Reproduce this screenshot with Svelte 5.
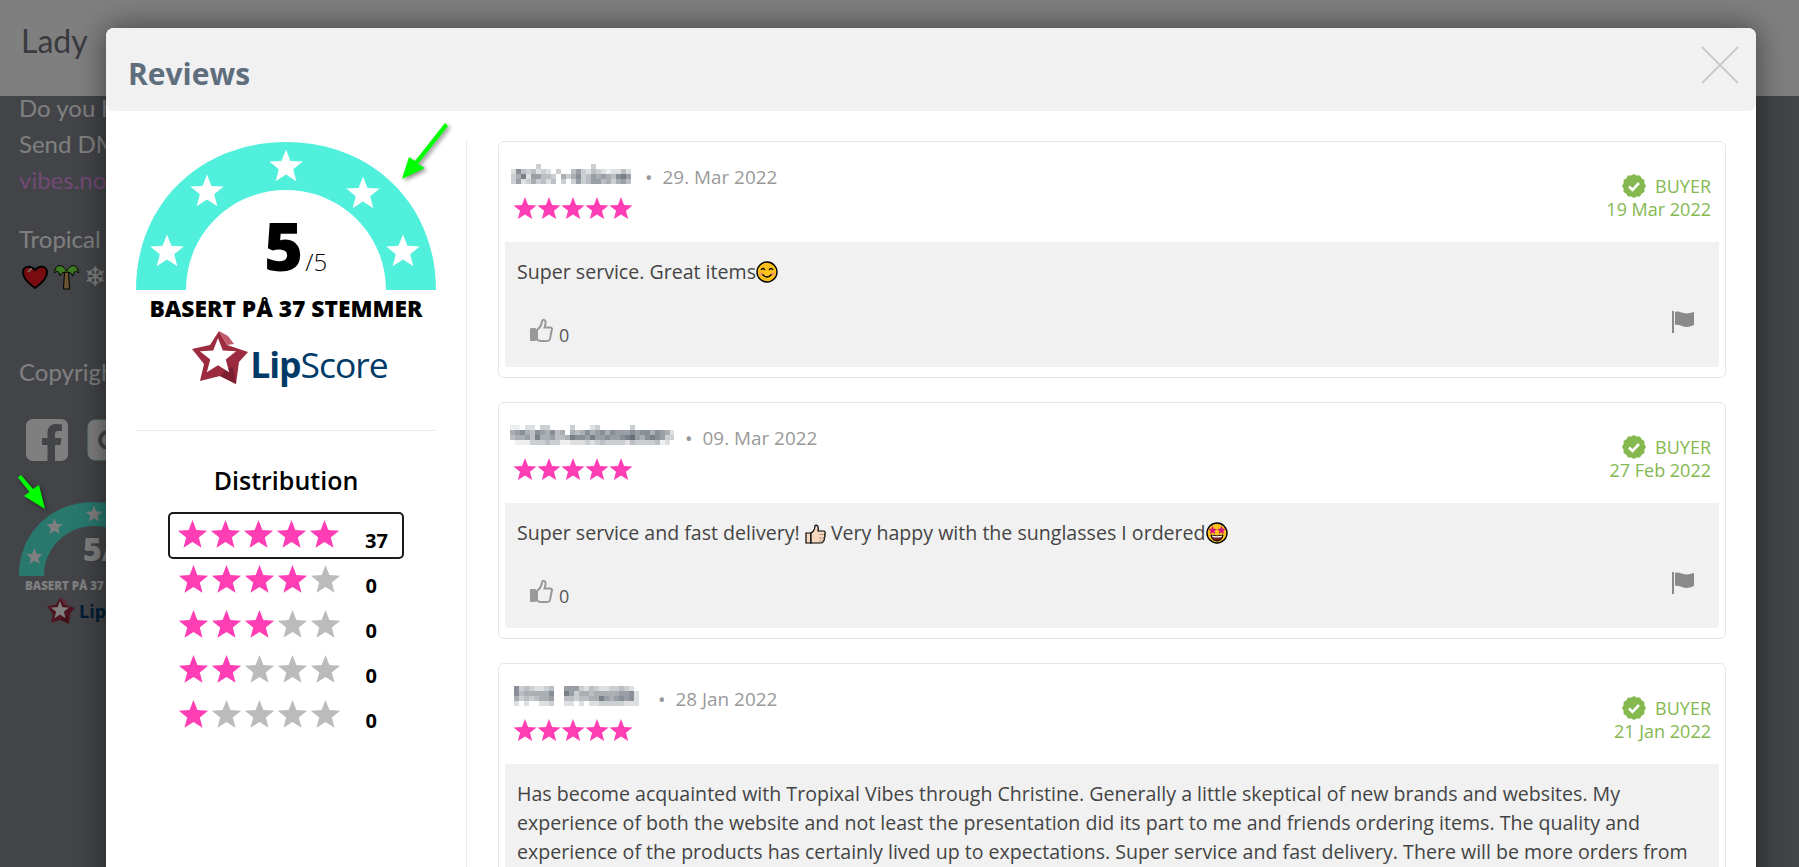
<script>
  // five point star, returned as an svg points string
  function star(cx, cy, r) {
    const pts = [];
    for (let i = 0; i < 10; i++) {
      const rad = i % 2 ? r * 0.43 : r;
      const a = (Math.PI / 5) * i - Math.PI / 2;
      pts.push((cx + rad * Math.cos(a)).toFixed(2) + ',' + (cy + rad * Math.sin(a)).toFixed(2));
    }
    return pts.join(' ');
  }

  function seal(cx, cy, r1, r2, n) {
    const pts = [];
    for (let i = 0; i < n * 2; i++) {
      const rad = i % 2 ? r2 : r1;
      const a = (Math.PI / n) * i;
      pts.push((cx + rad * Math.cos(a)).toFixed(2) + ',' + (cy + rad * Math.sin(a)).toFixed(2));
    }
    return pts.join(' ');
  }

  const gaugeStars = [
    [31, 110],
    [71, 50],
    [150, 25],
    [227, 52],
    [267, 110]
  ];

  const distribution = [
    { filled: 5, count: 37, active: true },
    { filled: 4, count: 0 },
    { filled: 3, count: 0 },
    { filled: 2, count: 0 },
    { filled: 1, count: 0 }
  ];

  // pixelated names: one digit per 5px cell, 0 is white
  const reviews = [
    {
      left: 1,
      width: 124,
      name: [
        '000003000000000030000000',
        '274342320300463243212242',
        '358266443053573465654786',
        '362353424030363466453564'
      ],
      date: '29. Mar 2022',
      buyer: '19 Mar 2022',
      emoji: 'simple'
    },
    {
      left: 0,
      width: 164,
      name: [
        '110220330000300023000000300000000',
        '567547657450545756757666767757652',
        '455648556445877686676678965787633',
        '011133343311222323433332433334120'
      ],
      date: '09. Mar 2022',
      buyer: '27 Feb 2022',
      emoji: 'thumb'
    },
    {
      left: 4,
      width: 137,
      name: [
        '73432234006663243223343200',
        '74555557008635545555566720',
        '53434556004434455865676720',
        '20200223002202022333332220'
      ],
      date: '28 Jan 2022',
      buyer: '21 Jan 2022',
      emoji: 'long'
    }
  ];

  function cell(d) {
    return `rgb(${255 - d * 17},${255 - d * 16},${255 - d * 15})`;
  }
</script>

{#snippet gaugeArc(size)}
  <svg class="arc" width={size} height={size * 0.4933} viewBox="0 0 300 148">
    <path class="band" d="M0 148 C0 60 66 0 150 0 C234 0 300 60 300 148 L250 148 C250 92 205 48 150 48 C95 48 50 92 50 148 Z" />
    {#each gaugeStars as s}
      <polygon class="gauge-star" points={star(s[0], s[1], 17.6)} />
    {/each}
  </svg>
{/snippet}

{#snippet lipStar(size)}
  <svg class="lipstar" width={size} height={size} viewBox="0 0 56 54">
    <polygon fill="#9c2b40" points="27,0 35,14 56,21 47,31 44,53 28,45 8,50 12,33 0,18 18,14" />
    <polygon fill="#c25a6b" points="27,0 35,14 42,13 36,5" />
    <polygon fill="#7c1f30" points="44,53 28,45 34,38 41,36" />
    <polygon fill="#fff" points={star(26, 26, 19)} />
  </svg>
{/snippet}

<div class="page">
  <div class="topbar"><h1>Lady</h1></div>
  <div class="footer">
    <p>Do you have any questions?</p>
    <p>Send DM or email to</p>
    <p class="link">vibes.no</p>
    <p class="tropical">Tropical</p>
    <div class="bg-emoji">
      <svg width="28" height="26" viewBox="0 0 28 26">
        <path d="M14 24 C6 18 2 14 2 8 C2 3 9 0 14 6 C19 0 26 3 26 8 C26 14 22 18 14 24 Z" fill="#f01822" stroke="#000" stroke-width="2" />
        <path d="M7 8 Q9 5 11 5" stroke="#fca" stroke-width="2" fill="none" />
      </svg>
      <svg width="25" height="27" viewBox="0 0 25 27">
        <path d="M10.500 9 H14.500 L15.500 26 H9.500 Z" fill="#d8a866" stroke="#000" />
        <path d="M12.500 8 C8 0 1 1 0.500 10 C3 7 5 8 6 13 C7 10 10 9 12.500 9 C15 9 18 10 19 13 C20 8 22 7 24.500 10 C24 1 17 0 12.500 8 Z" fill="#7af044" stroke="#000" />
      </svg>
      <span class="flake">❄</span>
    </div>
    <p class="copy">Copyright</p>
    <div class="social">
      <svg width="42" height="42" viewBox="0 0 42 42">
        <path fill="#fff" d="M7 0 H35 C39 0 42 3 42 7 V35 C42 39 39 42 35 42 H29 V26 H34.500 L35.500 19 H29 V15 C29 13 30 12 32 12 H36 V5.500 C34 5.200 32 5 30 5 C25 5 21.500 8 21.500 14 V19 H16 V26 H21.500 V42 H7 C3 42 0 39 0 35 V7 C0 3 3 0 7 0 Z" />
      </svg>
      <svg width="42" height="42" viewBox="0 0 42 42">
        <rect x="1" y="1" width="40" height="40" rx="7" fill="#fff" stroke="#cfe" />
        <circle cx="21" cy="21" r="8" fill="none" stroke="#84898f" stroke-width="4" />
      </svg>
    </div>
    <div class="mini">
      {@render gaugeArc(150)}
      <span class="mini-score">5/5</span>
      <div class="mini-label">BASERT PÅ 37 STEMMER</div>
      <div class="mini-logo">
        {@render lipStar(28)}
        <span>LipScore</span>
      </div>
    </div>
  </div>

  <div class="overlay"></div>

  <svg class="arrow small" width="40" height="48" viewBox="0 0 40 48">
    <polygon fill="#00ff00" points="27,35 6,22 11.500,18 0,3.500 3,1 15,15 21,11" />
  </svg>

  <div class="modal">
    <header>
      <h2>Reviews</h2>
      <svg class="close" width="38" height="38" viewBox="0 0 38 38">
        <path d="M1 1 L37 37 M37 1 L1 37" />
      </svg>
    </header>

    <div class="body">
      <aside>
        <div class="gauge">
          {@render gaugeArc(300)}
          <div class="score"><b>5</b><span>/5</span></div>
        </div>
        <div class="label">BASERT PÅ 37 STEMMER</div>
        <div class="logo">
          {@render lipStar(56)}
          <span class="lip"><b>Lip</b>Score</span>
        </div>
        <hr />
        <h3>Distribution</h3>
        <div class="dist">
          {#each distribution as row}
            <div class="row" class:active={row.active}>
              <svg width="165" height="28" viewBox="0 0 165 28">
                {#each [0, 1, 2, 3, 4] as i}
                  <polygon class={i < row.filled ? 'on' : 'off'} points={star(16.5 + i * 33, 15.4, 15.4)} />
                {/each}
              </svg>
              <span class="count">{row.count}</span>
            </div>
          {/each}
        </div>
      </aside>

      <main>
        {#each reviews as r}
          <article>
            <div class="head">
              <div>
                <div class="who">
                  <svg class="name" width={r.width} height="20">
                    {#each r.name as line, y}
                      {#each line.split('') as d, x}
                        {#if d !== '0'}
                          <rect x={r.left + x * 5} y={y * 5} width="5" height="5" fill={cell(+d)} />
                        {/if}
                      {/each}
                    {/each}
                  </svg>
                  <span class="dot">•</span>
                  <span class="date">{r.date}</span>
                </div>
                <svg class="stars" width="120" height="22" viewBox="0 0 120 22">
                  {#each [0, 1, 2, 3, 4] as i}
                    <polygon class="on" points={star(12 + i * 24, 12.2, 12.2)} />
                  {/each}
                </svg>
              </div>
              <div class="buyer">
                <div class="badge">
                  <svg width="24" height="24" viewBox="0 0 24 24">
                    <polygon points={seal(12, 12, 12, 10.8, 12)} fill="#85b84f" />
                    <path d="M7 12.5 L10.5 16 L17 9" fill="none" stroke="#fff" stroke-width="2.6" />
                  </svg>
                  BUYER
                </div>
                <div>{r.buyer}</div>
              </div>
            </div>

            <div class="content">
              {#if r.emoji === 'simple'}
                <p>
                  Super service. Great items<svg class="emoji" width="22" height="22" viewBox="0 0 22 22">
                    <circle cx="11" cy="11" r="10" fill="#fcc21b" stroke="#000" stroke-width="1.4" />
                    <path d="M5 9 Q7 6 9 9 M13 9 Q15 6 17 9" fill="none" stroke="#000" stroke-width="1.3" />
                    <path d="M6 13 Q11 19 16 13" fill="none" stroke="#000" stroke-width="1.3" />
                    <circle cx="5" cy="13" r="1.6" fill="#f0907a" />
                    <circle cx="17" cy="13" r="1.6" fill="#f0907a" />
                  </svg>
                </p>
              {:else if r.emoji === 'thumb'}
                <p>
                  Super service and fast delivery! <svg class="emoji" width="21" height="20" viewBox="0 0 21 20">
                    <path d="M1 9 H6 V19 H1 Z" fill="#f7d7c0" stroke="#000" stroke-width="1.2" />
                    <path d="M6 9 C8 8 10 5 10 1.5 C12 0.5 14 2.5 13 7 H19 C20.5 7 20.5 10 19.5 10.5 C20.5 11.5 20 13.5 19 14 C19.5 15.5 19 17 18 17.5 C18 19 17 19 16 19 H6 Z" fill="#f7d7c0" stroke="#000" stroke-width="1.2" />
                    <path d="M14 10.5 H19 M14 14 H19 M14 17 H18" stroke="#b98" stroke-width="1" />
                  </svg> Very happy with the sunglasses I ordered<svg class="emoji" width="22" height="22" viewBox="0 0 22 22">
                    <circle cx="11" cy="11" r="10" fill="#fcc21b" stroke="#000" stroke-width="1.4" />
                    <polygon points={star(6.6, 8.4, 4.6)} fill="#d4147e" />
                    <polygon points={star(15.4, 8.4, 4.6)} fill="#d4147e" />
                    <path d="M5 13 Q11 15 17 13 Q16 19 11 19 Q6 19 5 13 Z" fill="#7a1a1a" stroke="#000" stroke-width="1" />
                    <path d="M6 13.6 Q11 15 16 13.6 L15.6 15 Q11 16 6.4 15 Z" fill="#fff" />
                  </svg>
                </p>
              {:else}
                <p>
                  Has become acquainted with Tropixal Vibes through Christine. Generally a little skeptical of new brands and websites. My
                  experience of both the website and not least the presentation did its part to me and friends ordering items. The quality and
                  experience of the products has certainly lived up to expectations. Super service and fast delivery. There will be more orders from
                </p>
              {/if}
              <div class="actions">
                <span class="like">
                  <svg width="23" height="24" viewBox="0 0 23 24">
                    <rect x="0" y="10" width="6" height="13" rx="1" fill="#999" />
                    <path d="M7 12 C9.5 10 11.5 7 12 3.5 C12.3 1 15 1 15.5 3.5 C15.8 5.5 15 7.5 14.5 9.5 H20.5 C22 9.5 22.4 11.5 21.6 12.5 L20 21 C19.6 22.4 18.6 23 17.5 23 H10.5 C9 23 8 22 7 21.6 Z" fill="none" stroke="#999" stroke-width="2" />
                  </svg>
                  <span class="likes">0</span>
                </span>
                <svg class="flag" width="23" height="22" viewBox="0 0 23 22">
                  <rect x="0" y="0" width="2" height="22" fill="#8a8a8a" />
                  <path d="M3 1 C7 -0.5 10 2.5 14 2.5 C17 2.5 19 1.5 22 1 V14 C19 15 17 16 14 16 C10 16 7 13 3 14 Z" fill="#8a8a8a" />
                </svg>
              </div>
            </div>
          </article>
        {/each}
      </main>
    </div>
  </div>

  <svg class="arrow big" width="56" height="66" viewBox="0 0 56 66">
    <polygon fill="#00ff00" points="2,56 9,34 15,38 45,0 48,3 18,41 25,45" />
  </svg>
</div>

<style>
  :global(body) {
    margin: 0;
    overflow: hidden;
  }

  .page {
    position: relative;
    width: 1799px;
    height: 867px;
    overflow: hidden;
    background: #84898f;
    font-family: 'Open Sans', sans-serif;
  }

  .topbar {
    height: 96px;
    background: #fff;
    padding: 0 21px;
    box-sizing: border-box;
  }

  h1 {
    margin: 0;
    padding-top: 22px;
    font: 400 32px/38px Lato, sans-serif;
    color: #70747f;
  }

  .footer {
    margin-top: -6px;
    padding: 0 19px;
    font: 400 24px/36px Lato, sans-serif;
    color: #fff;
  }

  .footer p {
    margin: 0;
    white-space: nowrap;
  }

  .link {
    color: #e093e8;
  }

  .tropical {
    margin-top: 23px !important;
  }

  .bg-emoji {
    display: flex;
    align-items: center;
    gap: 5px;
    height: 27px;
    padding-left: 2px;
    margin-top: 6px;
  }

  .flake {
    font: 27px 'DejaVu Sans', sans-serif;
    color: #fff;
  }

  .copy {
    margin-top: 64px !important;
  }

  .social {
    display: flex;
    gap: 19px;
    margin: 29px 0 0 7px;
  }

  .mini {
    position: relative;
    margin-top: 41px;
    width: 150px;
  }

  .mini-score {
    position: absolute;
    left: 64px;
    top: 25px;
    font: 800 32px/44px 'Open Sans', sans-serif;
    color: #fff;
  }

  .mini-label {
    font: 800 11.5px/14px 'Open Sans', sans-serif;
    text-align: center;
    color: #fff;
    margin-top: 3px;
    white-space: nowrap;
  }

  .mini-logo {
    display: flex;
    align-items: center;
    gap: 4px;
    padding-left: 28px;
    margin-top: 4px;
    font: 700 18px/26px 'Open Sans', sans-serif;
    color: #003a66;
  }

  .overlay {
    position: absolute;
    inset: 0;
    background: rgba(0, 0, 0, 0.5);
  }

  .arrow {
    position: absolute;
    filter: drop-shadow(2px 2px 2px rgba(0, 0, 0, 0.45));
  }

  .arrow.small {
    left: 18px;
    top: 474px;
  }

  .arrow.big {
    left: 400px;
    top: 123px;
  }

  .modal {
    position: absolute;
    left: 106px;
    top: 28px;
    width: 1650px;
    height: 900px;
    background: #fff;
    border-radius: 8px;
    box-shadow: 0 0 30px rgba(0, 0, 0, 0.5);
  }

  header {
    display: flex;
    align-items: flex-start;
    justify-content: space-between;
    height: 83px;
    background: #f1f1f1;
    border-radius: 8px;
    padding: 0 17px 0 22px;
  }

  h2 {
    margin: 0;
    padding-top: 27px;
    font: 700 30px/38px 'Open Sans', sans-serif;
    color: #5f6e7d;
  }

  .close {
    margin-top: 18px;
  }

  .close path {
    stroke: #cbcbcb;
    stroke-width: 2;
    fill: none;
  }

  .body {
    display: flex;
    align-items: stretch;
    padding-top: 30px;
    height: 800px;
  }

  aside {
    width: 300px;
    padding: 0 30px;
    border-right: 1px solid #e8e8e8;
    flex: none;
  }

  .arc {
    display: block;
  }

  .band {
    fill: #50f0dc;
  }

  .gauge-star {
    fill: #fff;
  }

  .gauge {
    position: relative;
    margin-top: 1px;
  }

  .score {
    position: absolute;
    left: 128px;
    bottom: -1px;
    display: flex;
    align-items: baseline;
    color: #000;
    line-height: 92px;
    height: 92px;
  }

  .score b {
    font-size: 67px;
    font-weight: 800;
  }

  .score span {
    font-size: 24px;
    font-weight: 300;
    margin-left: 2px;
    color: #000;
  }

  .label {
    font-size: 22.8px;
    line-height: 30px;
    font-weight: 800;
    color: #000;
    text-align: center;
    white-space: nowrap;
    margin-top: 4px;
  }

  .logo {
    display: flex;
    align-items: center;
    justify-content: center;
    gap: 2px;
    margin-top: 5px;
    padding-left: 8px;
    color: #003a66;
  }

  .lip {
    font-size: 35.5px;
    line-height: 48px;
    font-weight: 400;
    letter-spacing: -1px;
    margin-top: 11px;
  }

  .lip b {
    font-weight: 700;
  }

  hr {
    border: none;
    border-top: 1px solid #e8e8e8;
    margin: 42px 0 0;
  }

  h3 {
    margin: 31px 0 0;
    font-size: 25px;
    line-height: 36px;
    font-weight: 600;
    color: #000;
    text-align: center;
  }

  .dist {
    width: 236px;
    margin: 14px auto 0;
  }

  .row {
    display: flex;
    align-items: flex-start;
    box-sizing: border-box;
    height: 45px;
    padding: 6px 0 0 8.5px;
  }

  .row.active {
    height: 47px;
    padding: 6.5px 0 0 6px;
    border: 2.5px solid #1a1a1a;
    border-radius: 5px;
  }

  .row svg {
    flex: none;
    display: block;
  }

  .on {
    fill: #ff3eb5;
  }

  .off {
    fill: #bbb;
  }

  .count {
    margin-left: 24px;
    font-size: 20px;
    line-height: 27px;
    font-weight: 700;
    color: #000;
    padding-top: 7px;
  }

  main {
    flex: 1;
    min-width: 0;
    padding: 0 30px 0 31px;
  }

  article {
    box-sizing: border-box;
    min-height: 237px;
    margin-bottom: 24px;
    border: 1px solid #e6e6e6;
    border-radius: 6px;
    padding: 0 6px 10px;
  }

  .head {
    display: flex;
    justify-content: space-between;
    height: 100px;
    padding: 24px 8px 0 5px;
    box-sizing: border-box;
  }

  .who {
    display: flex;
    align-items: center;
    height: 22px;
    font-size: 18.9px;
    color: #999;
  }

  .name {
    display: block;
    margin-top: -6px;
  }

  .dot {
    margin: 0 10px 0 11px;
    font-size: 20px;
  }

  .stars {
    display: block;
    margin: 9px 0 0 3px;
  }

  .buyer {
    padding-top: 8px;
    font-size: 18px;
    line-height: 23px;
    color: #85b84f;
    text-align: right;
  }

  .badge {
    display: flex;
    align-items: center;
    justify-content: flex-end;
    gap: 9px;
  }

  .content {
    min-height: 125px;
    box-sizing: border-box;
    background: #f1f1f1;
    border-radius: 0 0 4px 4px;
    padding: 15px 12px 0;
    color: #444;
    font-size: 19.58px;
    line-height: 29px;
  }

  .content p {
    margin: 0;
    min-height: 45px;
  }

  .emoji {
    vertical-align: -4px;
  }

  .actions {
    display: flex;
    justify-content: space-between;
    align-items: flex-start;
    padding: 0 12px 0 13px;
  }

  .like {
    display: flex;
    align-items: flex-start;
    gap: 6px;
    color: #555;
    line-height: 24px;
    margin-top: 16px;
    font-size: 18px;
  }

  .likes {
    padding-top: 5px;
  }

  .flag {
    margin-top: 9px;
  }
</style>
